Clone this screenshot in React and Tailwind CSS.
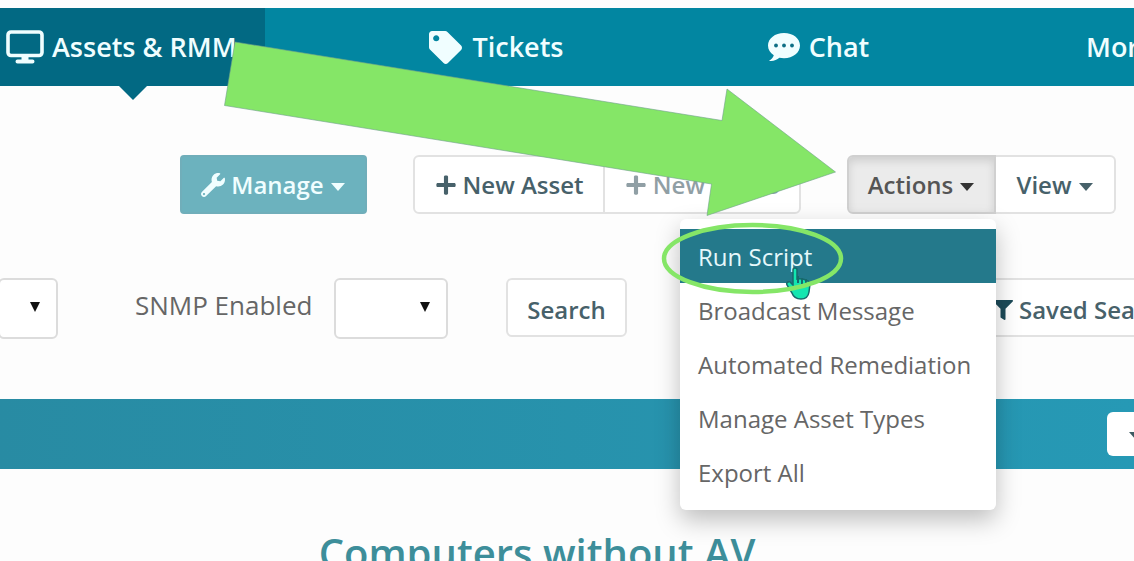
import { FaTag, FaWrench, FaPlus, FaFilter } from 'react-icons/fa';

const actionItems = ['Run Script', 'Broadcast Message', 'Automated Remediation', 'Manage Asset Types', 'Export All'];

const btn = 'flex items-center justify-center h-[59px] border-2 border-[#e2e2e2] bg-white text-2xl font-semibold whitespace-nowrap text-[#47616a]';

function Caret({ className = '' }) {
  return (
    <svg viewBox="0 0 16 8" className={`w-4 h-2 mt-1 shrink-0 ${className}`} fill="currentColor" aria-hidden="true">
      <path d="M1 0h14L8 8z" />
    </svg>
  );
}

function MonitorIcon() {
  return (
    <svg viewBox="0 0 38 34" className="w-[38px] h-[34px] shrink-0" aria-hidden="true">
      <rect x="2" y="2" width="34" height="23.500" rx="3" fill="none" stroke="currentColor" strokeWidth="3.600" />
      <path d="M15.500 26h7v3.500h4q2 0 2 2t-2 2h-15q-2 0-2-2t2-2h4z" fill="currentColor" />
    </svg>
  );
}

function ChatIcon() {
  return (
    <svg viewBox="0 0 34 30" className="w-[34px] h-[30px] shrink-0" aria-hidden="true">
      <path d="M17 1C8 1 1 6.500 1 13.500c0 4 2.200 7.500 5.800 9.700-.7 2.600-2.600 4-4.800 5.600 4 .7 7.600-.6 10.400-3 1.500.3 3 .4 4.600.4 9 0 16-5.600 16-12.700S26 1 17 1z" fill="currentColor" />
      <g fill="#0d6f85">
        <circle cx="9" cy="13.500" r="1.900" />
        <circle cx="17" cy="13.500" r="1.900" />
        <circle cx="25" cy="13.500" r="1.900" />
      </g>
    </svg>
  );
}

function NavBar() {
  return (
    <nav className="grid grid-cols-[minmax(0,265fr)_minmax(0,463fr)_minmax(0,180fr)_minmax(0,226fr)] h-[78px] bg-[#0286a1] text-[#f0feff] text-[27px] font-semibold overflow-x-clip">
      <a href="#assets" className="relative flex items-center gap-2 pl-[6px] bg-[#026983] whitespace-nowrap">
        <MonitorIcon /> Assets &amp; RMM
        <svg viewBox="0 0 28 14" className="absolute top-full left-1/2 -translate-x-1/2 w-7 h-3.5 text-[#026983]" fill="currentColor" aria-hidden="true">
          <path d="M0 0h28L14 14z" />
        </svg>
      </a>
      <a href="#tickets" className="flex items-center justify-center gap-2.5 whitespace-nowrap">
        <FaTag className="w-[33px] h-[33px]" /> Tickets
      </a>
      <a href="#chat" className="flex items-center justify-center gap-2 whitespace-nowrap">
        <ChatIcon /> Chat
      </a>
      <a href="#more" className="flex items-center pl-[178px] whitespace-nowrap">More</a>
    </nav>
  );
}

function ActionsMenu() {
  return (
    <div className="absolute z-20 right-0 top-16 w-[316px] pt-[10px] pb-[11px] bg-white rounded-md shadow-[0_10px_24px_rgba(0,0,0,0.25)]">
      {actionItems.map((item, i) => (
        <button key={item} type="button" className={`relative flex items-center w-full h-[54px] pt-0.5 px-[18px] text-2xl whitespace-nowrap ${i === 0 ? 'bg-[#24798b] text-[#e6f8fb]' : 'text-[#666]'}`}>
          {item}
          {i === 0 && <HandCursor />}
        </button>
      ))}
    </div>
  );
}

function HandCursor() {
  return (
    <svg viewBox="0 0 26 34" className="absolute left-[105px] top-[38px] w-[26px] h-[34px]" aria-hidden="true">
      <path d="M8 3q0-2 2-2t2 2v9q5-1 11 2 2 1 2 3l-1 8q-1 7-8 7t-9-6l-5-8q-1-2 1-3t3 1l2 2z" fill="#12e6b0" stroke="#176a6c" strokeWidth="1.500" />
      <path d="M13 9v7M17 11v6M21 12v5" stroke="#176a6c" strokeWidth="2" fill="none" />
    </svg>
  );
}

function Toolbar() {
  return (
    <div className="flex gap-[46px] pt-[69px] pl-[180px]">
      <button type="button" className="flex items-center justify-center gap-1.5 w-[187px] h-[59px] rounded bg-[#6cb2be] border-2 border-[#70aeba] text-2xl font-semibold text-[#f0feff] shrink-0">
        <FaWrench className="w-6 h-6" /> Manage <Caret />
      </button>
      <div className="flex shrink-0">
        <button type="button" className={`${btn} gap-1.5 w-[192px] rounded-l-md`}>
          <FaPlus className="w-[22px] h-[22px]" /> New Asset
        </button>
        <button type="button" className={`${btn} -ml-0.5 gap-1.5 w-[198px] rounded-r-md`}>
          <span className="flex items-center gap-1.5 opacity-60"><FaPlus className="w-[22px] h-[22px]" /> New Alerts</span>
        </button>
      </div>
      <div className="flex shrink-0">
        <div className="relative">
          <button type="button" aria-expanded="true" className="flex items-center justify-center gap-1.5 w-[149px] h-[59px] rounded-l-md border-2 border-[#d0d0d0] bg-[#ebebeb] shadow-[inset_0_4px_8px_rgba(0,0,0,0.12)] text-2xl font-semibold text-[#555]">
            Actions <Caret className="text-[#333]" />
          </button>
          <ActionsMenu />
        </div>
        <button type="button" className={`${btn} gap-1.5 w-[120px] border-l-0 rounded-r-md`}>
          View <Caret />
        </button>
      </div>
    </div>
  );
}

function SelectBox({ id, label, className }) {
  return (
    <div className={`relative shrink-0 ${className}`}>
      <select id={id} aria-label={label} className="appearance-none w-full h-full px-3 bg-white border-2 border-[#dcdcdc] rounded-md text-2xl text-[#555]">
        <option></option>
        <option>Yes</option>
        <option>No</option>
      </select>
      <svg viewBox="0 0 12 11" className="absolute right-[17px] top-6 w-3 h-[11px] pointer-events-none" aria-hidden="true">
        <path d="M1 0h10L6 10z" fill="#111" />
      </svg>
    </div>
  );
}

function Filters() {
  return (
    <div className="flex items-start pt-16">
      <SelectBox id="filter" label="Filter" className="w-[60px] h-[61px] -ml-0.5" />
      <label htmlFor="snmp" className="w-[180px] ml-[77px] mr-[19px] pt-2 text-[26px] font-medium text-[#666] whitespace-nowrap shrink-0">SNMP Enabled</label>
      <SelectBox id="snmp" label="SNMP Enabled" className="w-[114px] h-[61px]" />
      <button type="button" className={`${btn} pt-1 ml-[58px] w-[121px] rounded-md shrink-0`}>Search</button>
      <button type="button" className={`${btn} pt-1 ml-[344px] gap-1.5 px-5 rounded-l-md shrink-0`}>
        <FaFilter className="w-5 h-[22px] text-[#1d4b59]" /> Saved Searches
      </button>
    </div>
  );
}

// Arrow and ring that point at the highlighted menu entry
function Callout() {
  return (
    <svg viewBox="0 0 1134 561" className="absolute z-30 left-0 top-0 w-[1134px] h-[561px] pointer-events-none" aria-hidden="true">
      <path d="M235 42L722 120.500L727 89L835.500 172L707 215.500L711.500 184L224.500 105.500Z" fill="#85e667" stroke="#6f9f8c" strokeWidth="0.600" />
      <ellipse cx="752.500" cy="258.500" rx="88.500" ry="33.500" fill="none" stroke="#85e667" strokeWidth="4.500" />
    </svg>
  );
}

export default function App() {
  return (
    <div className="relative h-screen overflow-hidden pt-2 bg-[#fdfdfd] font-['Open_Sans',sans-serif]">
      <NavBar />
      <Toolbar />
      <Filters />
      <div className="flex items-center justify-end h-[70px] mt-[60px] bg-linear-to-r from-[#288ba3] to-[#2699b5]">
        <button type="button" aria-label="Options" className="flex items-center w-[27px] h-[44px] pl-[21px] overflow-hidden bg-white rounded-l-md text-[#3d5a62]">
          <Caret />
        </button>
      </div>
      <h2 className="mt-[60px] pr-[60px] text-center text-[40px] leading-[48px] font-semibold text-[#3d8e9a]">Computers without AV</h2>
      <Callout />
    </div>
  );
}
